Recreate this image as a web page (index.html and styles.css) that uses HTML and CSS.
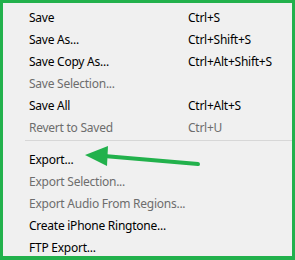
FILE: index.html
```html
<!DOCTYPE html>
<html lang="en">
<head>
    <meta charset="UTF-8">
    <title>File menu</title>
    <link rel="stylesheet" href="styles.css">
</head>
<body>
    <div class="frame">
        <ul class="menu">
            <li class="item"><span>Save</span><span>Ctrl+S</span></li>
            <li class="item"><span>Save As...</span><span>Ctrl+Shift+S</span></li>
            <li class="item"><span>Save Copy As...</span><span>Ctrl+Alt+Shift+S</span></li>
            <li class="item disabled"><span>Save Selection...</span><span></span></li>
            <li class="item"><span>Save All</span><span>Ctrl+Alt+S</span></li>
            <li class="item disabled"><span>Revert to Saved</span><span>Ctrl+U</span></li>
            <li class="separator"></li>
            <li class="item"><span>Export...</span><span></span></li>
            <li class="item disabled"><span>Export Selection...</span><span></span></li>
            <li class="item disabled"><span>Export Audio From Regions...</span><span></span></li>
            <li class="item"><span>Create iPhone Ringtone...</span><span></span></li>
            <li class="item"><span>FTP Export...</span><span></span></li>
        </ul>

        <!-- стрелка-пометка -->
        <svg class="arrow" width="295" height="260" viewBox="0 0 295 260">
            <line x1="104" y1="156" x2="198" y2="164" stroke="#22b14c" stroke-width="4" stroke-linecap="round"/>
            <polygon points="85,155 108,146 107,166" fill="#22b14c"/>
        </svg>
    </div>
</body>
</html>
```

FILE: styles.css
```css
* {
    box-sizing: border-box;
    margin: 0;
    padding: 0;
}

body {
    font-family: "Noto Sans", sans-serif;
    font-size: 12px;
    letter-spacing: -0.25px;
    color: #000;
    background: #fff;
}

.frame {
    position: relative;
    width: 295px;
    height: 260px;
    background: #f0f0f0;
    border: 3px solid #22b14c;
    border-bottom-width: 4px;
}

.menu {
    list-style: none;
    padding-top: 3px;
}

.item {
    display: grid;
    grid-template-columns: 159px 1fr;
    height: 22px;
    align-items: center;
    padding-left: 26px;
    white-space: nowrap;
}

.item.disabled {
    color: #6d6d6d;
}

.separator {
    height: 8px;
    margin-left: 22px;
    border-top: 1px solid #d7d7d7;
    margin-top: 2px;
}

.arrow {
    position: absolute;
    left: -3px;
    top: -3px;
}
```
